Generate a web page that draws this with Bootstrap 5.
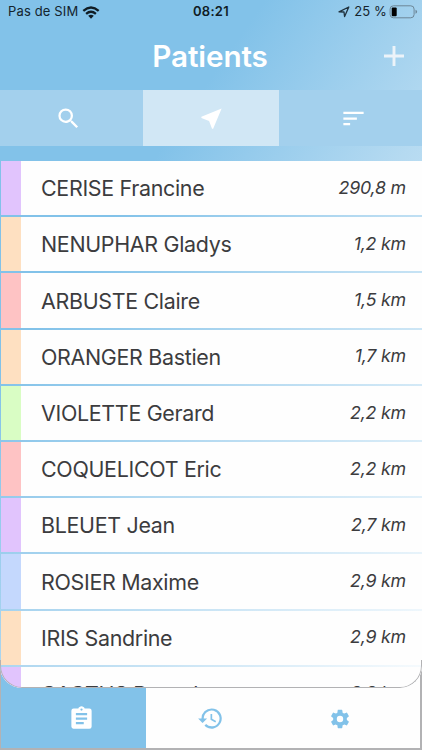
<!DOCTYPE html>
<html lang="fr">
<head>
<meta charset="utf-8">
<meta name="viewport" content="width=device-width, initial-scale=1">
<title>Patients</title>
<link href="https://cdn.jsdelivr.net/npm/bootstrap@5.3.0/dist/css/bootstrap.min.css" rel="stylesheet">
<style>
body{font-family:Inter,"Liberation Sans",sans-serif;color:#3c3c3e}
.screen,.patients{background:linear-gradient(125deg,#82c2e9 28%,#b5daf1 54%,#fff 100%) fixed}
.screen{height:750px}
.status{height:24px;font-size:13px;color:#14242e;letter-spacing:.15px}
.status>*{flex:1 1 0}
.clock{font-weight:600;color:#101c24;letter-spacing:.3px;padding-right:4px}
.battery{margin-left:2px}
.titlebar{height:66px}
.titlebar h1{font-size:29.7px;font-weight:600;line-height:65px;letter-spacing:-.1px;margin:0 2px 0 0}
.add{right:17px;top:21px;line-height:0}
.tabs{height:56px;margin-bottom:15px}
.tabs button,.dock button{border:0;padding:0}
.tabs button{background:#a3d0ed;flex:0 0 143px}
.tabs button:first-child{padding-right:7px}
.tabs button:last-child{padding-left:6px}
.tabs .on{background:#d1e7f5;flex:0 0 136px}
.patients{height:527px;border-radius:0 0 22px 22px;z-index:1;padding-left:1px}
.patients::after{content:"";position:absolute;left:0;right:0;bottom:0;height:28px;border:solid #b2b2b4;border-width:0 1.5px 1px;border-radius:0 0 22px 22px}
.patient{height:54.2px;margin-bottom:2px;background:#fefefe;flex:none}
.tag{width:20px}
.name{font-size:21.45px;padding-left:20px;flex:1;white-space:nowrap;letter-spacing:-.32px;padding-top:.5px}
.dist{font-size:17.8px;font-style:italic;padding-right:16px;letter-spacing:-.2px}
.violet{background:#e1c4fd}.peach{background:#fee0c1}.rose{background:#fec3c4}.lime{background:#d9fdc4}.sky{background:#c4d8fd}
.dock{height:90px;margin-top:-28px;background:#fefefe;border:solid #b2b2b4;border-width:0 2px 2px 1px}
.dock button{background:none;padding-top:28px;color:#82c2e9;flex:0 0 129px}
.dock .on{background:#82c2e9;color:#fff;flex:0 0 145px;padding-left:15px}
</style>
</head>
<body>
<main class="screen d-flex flex-column overflow-hidden">
  <header>
    <div class="status d-flex align-items-center">
      <div class="d-flex align-items-center ps-2"><span>Pas de SIM</span>
        <svg class="ms-1" width="18" height="13" viewBox="0 0 18 13" fill="none" stroke="#101c24" stroke-width="2.3"><path d="M1.3 4.8Q9-1.8 16.7 4.8M4.1 7.8q4.9-4.1 9.8 0"/><path d="M6.2 9.8q2.8-2 5.6 0L9 12.7z" fill="#101c24" stroke="none"/></svg>
      </div>
      <div class="clock text-center">08:21</div>
      <div class="d-flex align-items-center justify-content-end pe-1">
        <svg width="12" height="12" viewBox="0 0 12 12" fill="none" stroke="#20323e" stroke-width="1.3" stroke-linejoin="round"><path d="M1 5.8 10.8 1 6.6 10.6 6 6z"/></svg>
        <span class="ms-1">25 %</span>
        <svg class="battery" width="29" height="14" viewBox="0 0 28 14"><rect x=".6" y=".8" width="24" height="12" rx="3.3" fill="none" stroke="#6d8797"/><rect x="2.2" y="2.4" width="5" height="8.8" rx="1"/><path d="M26 4.8q1.6.7 1.6 2T26 8.8z" fill="#6d8797"/></svg>
      </div>
    </div>
    <div class="titlebar position-relative text-white text-center">
      <h1>Patients</h1>
      <span class="add position-absolute"><svg width="22" height="22" viewBox="0 0 22 22"><path d="M11 1v20M1 11h20" stroke="#ecf3f9" stroke-width="2.9"/></svg></span>
    </div>
  </header>
  <div class="tabs d-flex flex-shrink-0">
    <button aria-label="Rechercher"><svg width="27" height="27" viewBox="0 0 24 24" fill="#fff"><path d="M15.5 14h-.79l-.28-.27A6.47 6.47 0 0 0 16 9.5 6.5 6.5 0 1 0 9.5 16c1.61 0 3.09-.59 4.23-1.57l.27.28v.79l5 4.99L20.49 19zm-6 0a4.5 4.5 0 1 1 0-9 4.5 4.5 0 0 1 0 9z"/></svg></button>
    <button class="on" aria-label="À proximité"><svg width="27" height="27" viewBox="0 0 24 24" fill="#fff"><path d="M21 3 3 10.53v.98l6.84 2.65L12.48 21h.98z"/></svg></button>
    <button aria-label="Trier"><svg width="27" height="27" viewBox="0 0 24 24" fill="#fff"><path d="M3 18h6v-2H3zM3 6v2h18V6zm0 7h12v-2H3z"/></svg></button>
  </div>
  <div class="patients d-flex flex-column flex-shrink-0 overflow-hidden position-relative">
    <div class="patient d-flex align-items-center"><i class="tag violet h-100"></i><div class="name">CERISE Francine</div><div class="dist">290,8 m</div></div>
    <div class="patient d-flex align-items-center"><i class="tag peach h-100"></i><div class="name">NENUPHAR Gladys</div><div class="dist">1,2 km</div></div>
    <div class="patient d-flex align-items-center"><i class="tag rose h-100"></i><div class="name">ARBUSTE Claire</div><div class="dist">1,5 km</div></div>
    <div class="patient d-flex align-items-center"><i class="tag peach h-100"></i><div class="name">ORANGER Bastien</div><div class="dist">1,7 km</div></div>
    <div class="patient d-flex align-items-center"><i class="tag lime h-100"></i><div class="name">VIOLETTE Gerard</div><div class="dist">2,2 km</div></div>
    <div class="patient d-flex align-items-center"><i class="tag rose h-100"></i><div class="name">COQUELICOT Eric</div><div class="dist">2,2 km</div></div>
    <div class="patient d-flex align-items-center"><i class="tag violet h-100"></i><div class="name">BLEUET Jean</div><div class="dist">2,7 km</div></div>
    <div class="patient d-flex align-items-center"><i class="tag sky h-100"></i><div class="name">ROSIER Maxime</div><div class="dist">2,9 km</div></div>
    <div class="patient d-flex align-items-center"><i class="tag peach h-100"></i><div class="name">IRIS Sandrine</div><div class="dist">2,9 km</div></div>
    <div class="patient d-flex align-items-center"><i class="tag violet h-100"></i><div class="name">CACTUS Pascale</div><div class="dist">3,2 km</div></div>
  </div>
  <nav class="dock d-flex flex-shrink-0">
    <button class="on" aria-label="Patients"><svg width="27" height="27" viewBox="0 0 24 24" fill="currentColor"><path d="M19 3h-4.18C14.4 1.84 13.3 1 12 1s-2.4.84-2.82 2H5a2 2 0 0 0-2 2v14c0 1.1.9 2 2 2h14a2 2 0 0 0 2-2V5a2 2 0 0 0-2-2zm-7 0a1 1 0 1 1 0 2 1 1 0 0 1 0-2zm2 14H7v-2h7zm3-4H7v-2h10zm0-4H7V7h10z"/></svg></button>
    <button aria-label="Historique"><svg width="27" height="27" viewBox="0 0 24 24" fill="currentColor"><path d="M13 3a9 9 0 0 0-9 9H1l3.89 3.89.07.14L9 12H6a7 7 0 1 1 2.06 4.94l-1.42 1.42A9 9 0 1 0 13 3zm-1 5v5l4.28 2.54.72-1.21-3.5-2.08V8z"/></svg></button>
    <button aria-label="Réglages"><svg width="22" height="22" viewBox="0 0 24 24" fill="currentColor"><path d="M19.43 12.98c.04-.32.07-.64.07-.98s-.03-.66-.07-.98l2.11-1.65c.19-.15.24-.42.12-.64l-2-3.46c-.12-.22-.39-.3-.61-.22l-2.49 1c-.52-.4-1.08-.73-1.69-.98l-.38-2.65A.49.49 0 0 0 14 2h-4c-.25 0-.46.18-.49.42l-.38 2.65c-.61.25-1.17.59-1.69.98l-2.49-1c-.23-.09-.49 0-.61.22l-2 3.46c-.13.22-.07.49.12.64l2.11 1.65c-.04.32-.07.65-.07.98s.03.66.07.98l-2.11 1.65c-.19.15-.24.42-.12.64l2 3.46c.12.22.39.3.61.22l2.49-1c.52.4 1.08.73 1.69.98l.38 2.65c.03.24.24.42.49.42h4c.25 0 .46-.18.49-.42l.38-2.65c.61-.25 1.17-.59 1.69-.98l2.49 1c.23.09.49 0 .61-.22l2-3.46c.12-.22.07-.49-.12-.64zM12 15.5a3.5 3.5 0 1 1 0-7 3.5 3.5 0 0 1 0 7z"/></svg></button>
  </nav>
</main>
<script src="https://cdn.jsdelivr.net/npm/bootstrap@5.3.0/dist/js/bootstrap.bundle.min.js"></script>
</body>
</html>
